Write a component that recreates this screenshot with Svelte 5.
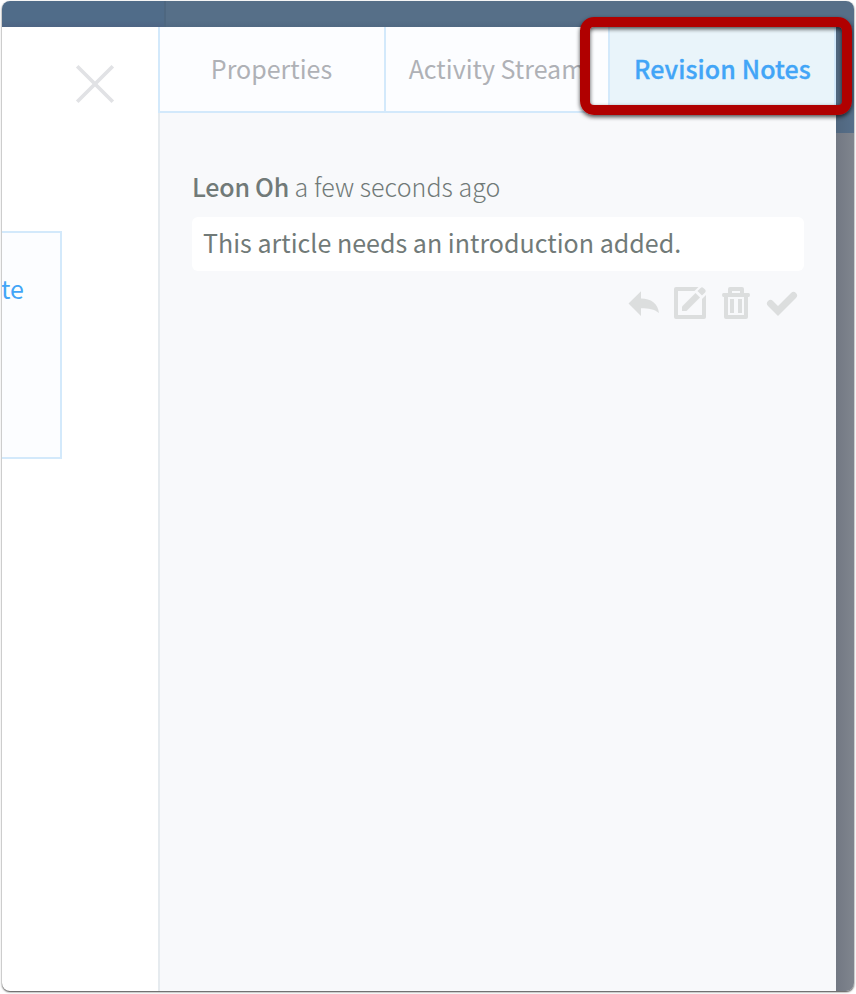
<script lang="ts">
  type Tab = { id: string; label: string }

  const tabs: Tab[] = [
    { id: 'properties', label: 'Properties' },
    { id: 'activity', label: 'Activity Stream' },
    { id: 'notes', label: 'Revision Notes' },
  ]

  let active = $state('notes')

  const notes = [
    { author: 'Leon Oh', time: 'a few seconds ago', text: 'This article needs an introduction added.' },
  ]
</script>

<div class="frame">
  <header class="topbar">
    <div class="topbar__side"></div>
    <div class="topbar__main"></div>
  </header>

  <div class="body">
    <section class="editor">
      <button class="close" aria-label="Close">
        <svg width="38" height="38" viewBox="0 0 38 38">
          <path d="M1.2 1.2 36.8 36.8M36.8 1.2 1.2 36.8" stroke="#e1e2e5" stroke-width="3.7" />
        </svg>
      </button>
      <div class="card"><span>te</span></div>
    </section>

    <aside class="panel">
      <nav class="tabs">
        {#each tabs as tab (tab.id)}
          <button class="tab" class:tab--active={active === tab.id} onclick={() => (active = tab.id)}>
            {tab.label}
          </button>
        {/each}
        <div class="highlight"></div>
      </nav>

      {#each notes as note}
        <article class="note">
          <p class="note__meta"><span class="note__author">{note.author}</span> <span class="note__time">{note.time}</span></p>
          <p class="note__text">{note.text}</p>
          <div class="note__actions">
            <button aria-label="Reply">
              <svg width="31" height="34" viewBox="-1 0 31 34">
                <path d="M.5 17.500 13 5.300V12.500C23 12.500 30 17.500 31 27C26 23 21 22.200 13 22.200V30Z" />
              </svg>
            </button>
            <button aria-label="Edit">
              <svg width="34" height="34" viewBox="0 0 34 34">
                <path d="M3 1H25.500L21.500 5H5V29H29V13L33 9V31Q33 33 31 33H3Q1 33 1 31V3Q1 1 3 1Z" />
                <path d="M9 20.500 22.500 7 27 11.500 13.500 25H9Z" />
                <path d="M24.500 5 27.600 1.900Q29 .5 30.400 1.900L32.100 3.600Q33.500 5 32.100 6.400L29 9.500Z" />
              </svg>
            </button>
            <button aria-label="Delete">
              <svg width="28" height="34" viewBox="0 0 28 34">
                <path fill-rule="evenodd" d="M6 7V3Q6 1 8 1H20Q22 1 22 3V7H26.500Q28 7 28 9T26.500 11H26V31Q26 33 24 33H4Q2 33 2 31V11H1.500Q0 11 0 9T1.500 7ZM10 5V7H18V5ZM6 11V29H22V11Z" />
                <path d="M8 13H12V27H8ZM16 13H20V27H16Z" />
              </svg>
            </button>
            <button aria-label="Resolve">
              <svg width="33" height="34" viewBox="-1 0 33 34">
                <path d="M4.500 17.500 12 25 27.500 9.500" fill="none" stroke="#dcdede" stroke-width="7" stroke-linecap="round" />
              </svg>
            </button>
          </div>
        </article>
      {/each}
    </aside>

    <div class="backdrop"></div>
  </div>
</div>

<style>
  :global(body) {
    background: #fff;
  }

  p {
    margin: 0;
  }

  button {
    padding: 0;
    border: 0;
    background: none;
    font: inherit;
    color: inherit;
  }

  svg {
    display: block;
    overflow: visible;
    fill: #dcdede;
  }

  .frame {
    box-sizing: border-box;
    display: flex;
    flex-direction: column;
    width: 852px;
    height: 990px;
    margin: 1px 2px 3px;
    border-radius: 8px;
    overflow: hidden;
    background: #fff;
    box-shadow: 0 1px 2px rgba(0, 0, 0, 0.75);
    font-family: 'Noto Sans CJK SC', 'Noto Sans', sans-serif;
    font-size: 25px;
    line-height: 36px;
  }

  .topbar {
    display: flex;
    flex: 0 0 26px;
  }

  .topbar__side {
    box-sizing: border-box;
    width: 164px;
    background: linear-gradient(#506c89 75%, #4e6584);
    border-right: 2px solid #4e6780;
  }

  .topbar__main {
    flex: 1;
    background: linear-gradient(#566f88 75%, #516983);
  }

  .body {
    display: flex;
    flex: 1;
    min-height: 0;
  }

  .editor {
    width: 156px;
  }

  .close {
    display: block;
    margin: 38px 0 0 74px;
  }

  .card {
    box-sizing: border-box;
    width: 60px;
    height: 228px;
    margin-top: 128px;
    padding-top: 37px;
    border: 2px solid #d3e9fb;
    border-left: 0;
    background: #fcfdff;
    color: #42a5f7;
  }

  /* the word runs off the left edge */
  .card span {
    margin-left: -1px;
  }

  .panel {
    display: flex;
    flex-direction: column;
    width: 678px;
    background: linear-gradient(90deg, #e6ebef 2px, #f8f9fb 2px);
  }

  .tabs {
    position: relative;
    box-sizing: border-box;
    display: grid;
    grid-template-columns: 226px 224px 228px;
    height: 86px;
    border-bottom: 2px solid #d3e9fb;
  }

  .tab {
    padding: 0 1px 2px 0;
    border-left: 2px solid #d3e9fb;
    background: #fcfdff;
    color: #afb1b6;
    white-space: nowrap;
  }

  .tab--active {
    padding: 0 0 2px 1px;
    border-right: 2px solid #d3e9fb;
    background: #e9f4fa;
    color: #42a5f7;
    font-weight: 500;
    letter-spacing: 0.08px;
    -webkit-text-stroke: 0.3px;
  }

  /* callout around the active tab */
  .highlight {
    position: absolute;
    top: -10px;
    right: -16px;
    box-sizing: border-box;
    width: 272px;
    height: 98px;
    border: 10px solid #b00000;
    border-radius: 14px;
    box-shadow:
      0 2px 4px rgba(0, 0, 0, 0.7),
      inset 0 2px 4px rgba(0, 0, 0, 0.7);
    pointer-events: none;
  }

  .note {
    padding: 55px 32px 0 34px;
    color: #717a78;
  }

  .note__meta {
    height: 49px;
  }

  .note__author {
    font-weight: 500;
    letter-spacing: -0.25px;
  }

  .note__time {
    font-weight: 300;
    letter-spacing: 0.06px;
  }

  .note__text {
    padding: 7px 11px 11px;
    border-radius: 6px;
    background: #fff;
    letter-spacing: 0.02px;
  }

  .note__actions {
    display: flex;
    justify-content: flex-end;
    gap: 15px;
    padding: 15px 6px 0 0;
  }

  .backdrop {
    flex: 1;
    background:
      linear-gradient(90deg, #50667e, #566f8a) 0 0 / 100% 106px no-repeat,
      linear-gradient(90deg, #727883, #80858e);
  }
</style>
